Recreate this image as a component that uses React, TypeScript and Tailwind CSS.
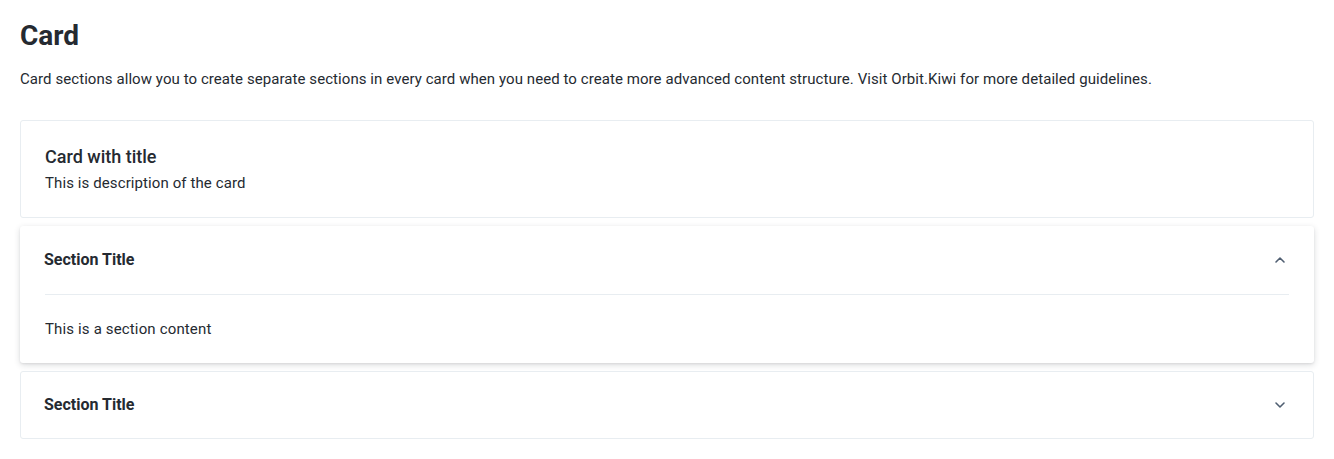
import React, { useState } from "react";

const ChevronUp = () => (
  <svg width="16" height="16" viewBox="0 0 16 16" fill="none" className="text-[#4f5e71]">
    <path d="M4 10l4-4 4 4" stroke="currentColor" strokeWidth="1.6" strokeLinecap="round" strokeLinejoin="round" />
  </svg>
);

const ChevronDown = () => (
  <svg width="16" height="16" viewBox="0 0 16 16" fill="none" className="text-[#4f5e71]">
    <path d="M4 6l4 4 4-4" stroke="currentColor" strokeWidth="1.6" strokeLinecap="round" strokeLinejoin="round" />
  </svg>
);

const App = () => {
  const [open, setOpen] = useState(true);

  return (
    <div className="min-h-screen bg-white px-5 pt-[18px] pb-5 text-[#252a31] font-['Roboto',sans-serif]">
      <h1 className="text-[28px] leading-[36px] font-bold">Card</h1>
      <p className="mt-[15px] text-[15px] leading-[20px] tracking-[0.07px]">
        Card sections allow you to create separate sections in every card when you need to create more advanced content
        structure. Visit Orbit.Kiwi for more detailed guidelines.
      </p>

      <div className="mt-[31px] flex flex-col gap-2">
        {/* Card header */}
        <div className="bg-white border border-[#e8edf1] rounded-[3px] p-6">
          <div className="text-[18px] leading-[24px] font-medium">Card with title</div>
          <div className="mt-1 text-[15px] leading-[20px] tracking-[0.1px]">This is description of the card</div>
        </div>

        {/* Expanded section */}
        <div className="bg-white rounded-[3px] shadow-[0_2px_6px_rgba(37,42,49,0.16),0_1px_2px_rgba(37,42,49,0.08)]">
          <div
            className="flex items-center justify-between p-6 pr-[26px] cursor-pointer"
            onClick={() => setOpen(!open)}
          >
            <div className="text-[16px] leading-[20px] font-bold">Section Title</div>
            <ChevronUp />
          </div>
          <div className="mx-[25px] border-t border-[#e8edf1]" />
          <div className="px-[25px] py-6 text-[15px] leading-[20px] tracking-[0.15px]">This is a section content</div>
        </div>

        {/* Collapsed section */}
        <div className="bg-white border border-[#e8edf1] rounded-[3px] h-[68px] pl-[23px] pr-[25px] flex items-center justify-between">
          <div className="text-[16px] leading-[20px] font-bold">Section Title</div>
          <ChevronDown />
        </div>
      </div>
    </div>
  );
};

export default App;
